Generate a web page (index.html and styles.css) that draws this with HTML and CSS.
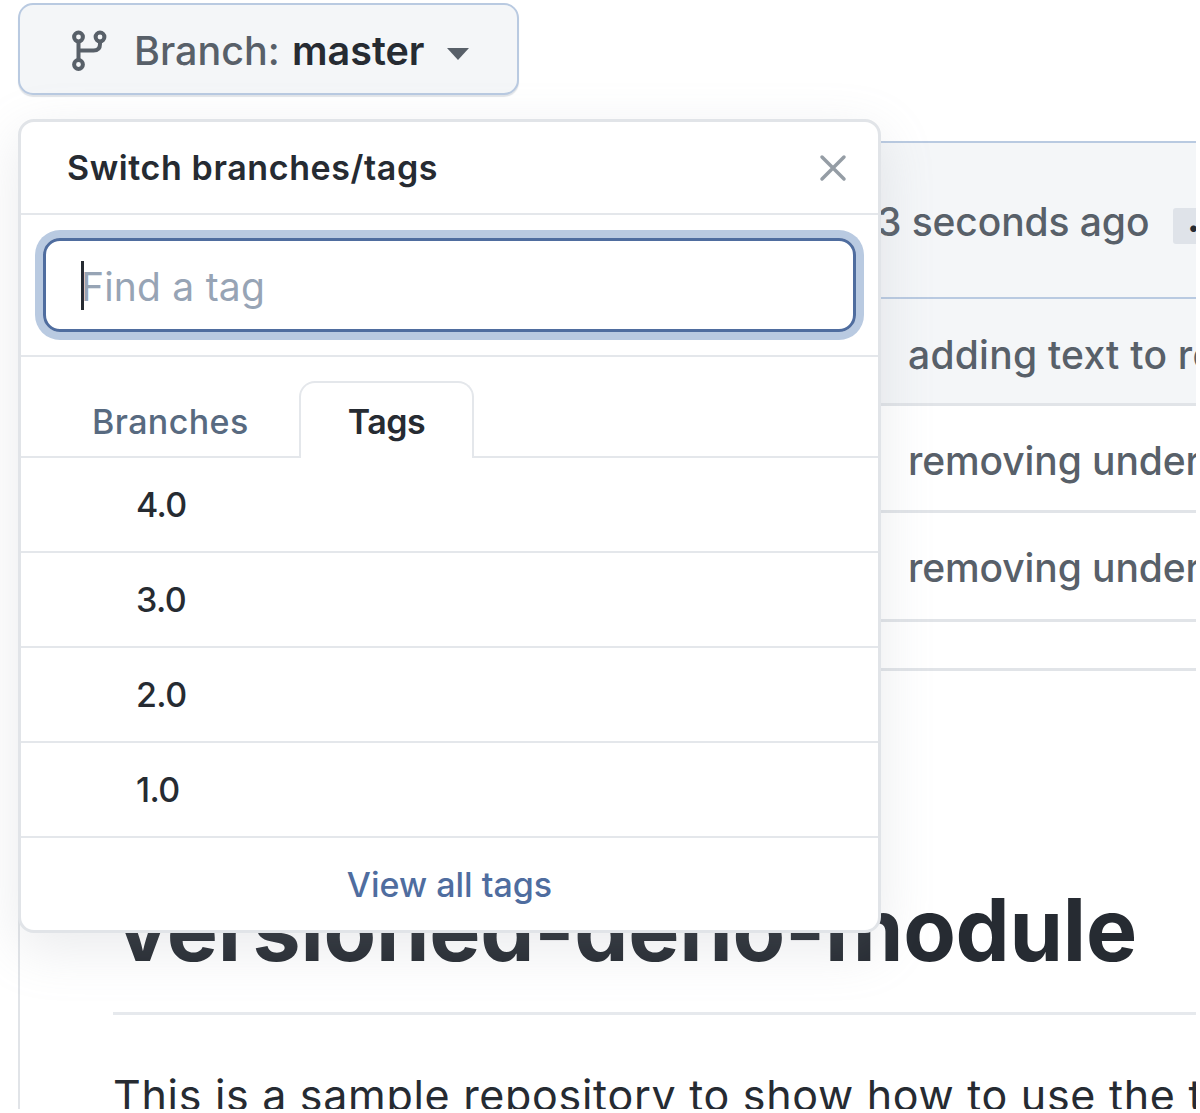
FILE: index.html
```html
<!DOCTYPE html>
<html lang="en">
<head>
<meta charset="utf-8">
<title>versioned-deno-module</title>
<link rel="stylesheet" href="styles.css">
</head>
<body>
<div class="page">
  <div class="toolbar">
    <button class="branch-button" type="button">
      <svg class="branch-icon" width="36" height="42" viewBox="0 0 36 42" fill="none" stroke="currentColor" stroke-width="4">
        <circle cx="7.500" cy="7" r="4.400"/>
        <circle cx="29" cy="7" r="4.400"/>
        <circle cx="7.500" cy="34.500" r="4.400"/>
        <path d="M7.500 11.500V30.500M29 11.500V14Q29 20.500 22.500 20.500H7.500"/>
      </svg>
      <span class="branch-label">Branch:</span>
      <span class="branch-name">master</span>
      <span class="caret"></span>
    </button>
    <div class="popover">
      <header class="popover-head">
        <h2 class="popover-title">Switch branches/tags</h2>
        <svg class="close" width="28" height="28" viewBox="0 0 28 28" stroke="currentColor" stroke-width="3.500" stroke-linecap="round"><path d="M3 3L25 25M25 3L3 25"/></svg>
      </header>
      <div class="filter">
        <div class="input"><span class="cursor"></span><span class="placeholder">Find a tag</span></div>
      </div>
      <nav class="tabs">
        <span class="tab">Branches</span>
        <span class="tab tab-active">Tags</span>
      </nav>
      <div class="item"><span>4.0</span></div>
      <div class="item"><span>3.0</span></div>
      <div class="item"><span>2.0</span></div>
      <div class="item"><span>1.0</span></div>
      <footer class="popover-foot"><span>View all tags</span></footer>
    </div>
  </div>
  <section class="files">
    <div class="commit"><span class="ago">3 seconds ago</span><span class="more">…</span></div>
    <div class="file file-tinted"><span>adding text to readme</span></div>
    <div class="file"><span>removing underscore</span></div>
    <div class="file file-last"><span>removing underscore</span></div>
    <div class="spacer"></div>
  </section>
  <article class="readme">
    <h1>versioned-deno-module</h1>
    <p>This is a sample repository to show how to use the tags</p>
  </article>
</div>
</body>
</html>
```
FILE: styles.css
```css
* { box-sizing: border-box; }
body {
  margin: 0;
  background: #fff;
  color: #262b32;
  font-family: Inter, "Liberation Sans", sans-serif;
}
.page {
  width: 1196px;
  height: 1109px;
  overflow: hidden;
}
.toolbar {
  position: relative;
  height: 141px;
  padding: 3px 0 0 18px;
}
.branch-button {
  display: flex;
  align-items: center;
  width: 501px;
  height: 92px;
  padding: 3px 0 0 51px;
  border: 2px solid #b9cae1;
  border-radius: 15px;
  background: #f4f6f8;
  box-shadow: 0 2px 1px #e1e4e8;
  font: 500 39.5px Inter, sans-serif;
  color: #586069;
  white-space: nowrap;
  text-align: left;
}
.branch-icon { margin-right: 27px; }
.branch-label { width: 158px; }
.branch-name { width: 155px; font-weight: 600; color: #262b32; }
.caret {
  margin-top: 6px;
  border: 11px solid transparent;
  border-top: 12px solid #586069;
  border-bottom: 0;
}
.popover {
  position: absolute;
  z-index: 2;
  top: 119px;
  left: 18px;
  width: 863px;
  height: 814px;
  border: 3px solid #e1e4e8;
  border-radius: 16px;
  background: #fff;
  box-shadow: 0 16px 54px rgba(149, 157, 165, .2);
  font-size: 34px;
  font-weight: 500;
}
.popover-head {
  display: flex;
  align-items: center;
  justify-content: space-between;
  height: 93px;
  padding: 0 31px 0 46px;
  border-bottom: 2px solid #e4e7eb;
}
.popover-title {
  margin: 0;
  font-size: 34px;
  font-weight: 600;
  letter-spacing: .6px;
}
.close { color: #959da5; }
.filter {
  height: 142px;
  padding: 23px 22px 0;
  border-bottom: 2px solid #e4e7eb;
}
.input {
  display: flex;
  align-items: center;
  height: 94px;
  padding-left: 35px;
  border: 3px solid #4f6d9f;
  border-radius: 17px;
  box-shadow: 0 0 0 8px #b9cae1;
}
.cursor { width: 3px; height: 49px; background: #262b32; }
.placeholder {
  margin-left: -3px;
  padding-top: 3px;
  font-size: 39px;
  font-weight: 400;
  letter-spacing: .2px;
  color: #97a4b5;
}
.tabs {
  display: flex;
  height: 101px;
  padding: 24px 0 0 71px;
  border-bottom: 2px solid #e4e7eb;
}
.tab {
  width: 207px;
  padding-top: 21px;
  line-height: 40px;
  letter-spacing: .4px;
  color: #586a80;
}
.tab-active {
  width: 175px;
  height: 77px;
  padding-top: 19px;
  border: 2px solid #e4e7eb;
  border-bottom: 0;
  border-radius: 16px 16px 0 0;
  background: #fff;
  text-align: center;
  font-weight: 600;
  letter-spacing: -.5px;
  color: #262b32;
}
.item {
  display: flex;
  align-items: center;
  height: 95px;
  padding-left: 115px;
  border-bottom: 2px solid #e4e7eb;
  letter-spacing: -.6px;
}
.popover-foot {
  display: flex;
  align-items: center;
  justify-content: center;
  height: 93px;
  color: #4f6d9f;
}
.files {
  margin-left: 18px;
  font-size: 39px;
  font-weight: 450;
  letter-spacing: -.1px;
  color: #586069;
  white-space: nowrap;
}
.commit {
  display: flex;
  align-items: center;
  height: 158px;
  padding: 3px 0 0 859px;
  border: 2px solid #b9cae1;
  border-width: 2px 0;
  background: #f4f6f8;
}
.ago { flex: none; width: 296px; }
.more {
  flex: none;
  width: 50px;
  height: 36px;
  margin-top: 8px;
  padding-left: 14px;
  border-radius: 3px;
  background: #dfe3e9;
  line-height: 20px;
  font-weight: 700;
  color: #262b32;
}
.file {
  display: flex;
  align-items: center;
  height: 107px;
  padding: 4px 0 0 890px;
  border-bottom: 3px solid #e1e4e8;
}
.file-tinted {
  padding-top: 7px;
  background: #f4f6f8;
  letter-spacing: .25px;
}
.file-last { height: 109px; padding-top: 2px; }
.spacer { height: 49px; border-bottom: 3px solid #e1e4e8; }
.readme {
  height: 500px;
  margin-left: 18px;
  padding: 216px 0 0 93px;
  border-left: 2px solid #e1e4e8;
  white-space: nowrap;
}
.readme h1 {
  height: 128px;
  margin: 0;
  padding-left: 4px;
  border-bottom: 3px solid #e6e9ed;
  font-size: 86px;
  font-weight: 700;
  line-height: 87px;
  letter-spacing: -.25px;
}
.readme p {
  margin: 55px 0 0;
  font-size: 43px;
  line-height: 50px;
  letter-spacing: .7px;
}
```
